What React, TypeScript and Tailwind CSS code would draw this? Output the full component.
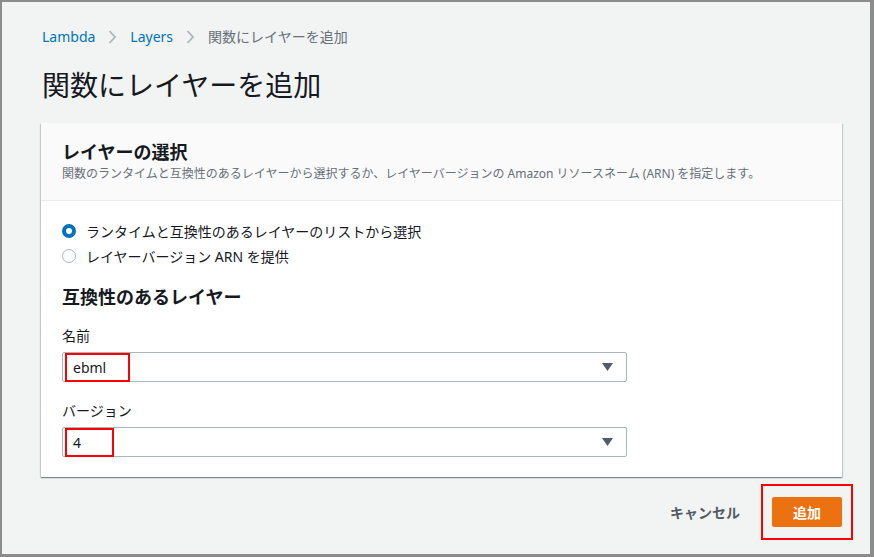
import React from "react";

const font = { fontFamily: '"Noto Sans", "Noto Sans CJK JP", sans-serif' };

function Arrow() {
  return (
    <svg width="11" height="8" viewBox="0 0 11 8" className="shrink-0">
      <path d="M0 0 L11 0 L5.5 8 Z" fill="#545b64" />
    </svg>
  );
}

function SelectBox({ value, boxW }: { value: string; boxW: number }) {
  return (
    <div className="relative flex h-[30px] w-[565px] items-center justify-between rounded-[2px] border border-[#aab7b8] bg-white pl-[10px] pr-[13px]">
      <span className="text-[14px] text-[#16191f]">{value}</span>
      <Arrow />
      <div
        className="pointer-events-none absolute left-[2px] top-0 h-[29px] border-2 border-[#ff0000]"
        style={{ width: boxW }}
      />
    </div>
  );
}

export default function App() {
  return (
    <div
      className="box-border h-[557px] w-[874px] overflow-hidden border-t-2 border-l-2 border-r-4 border-b-[3px] border-[#8c8c8c] bg-[#f2f3f3]"
      style={font}
    >
      <div className="flex h-[20px] items-center gap-[13px] pl-[40px] mt-[25px] text-[14px] leading-[20px]">
        <span className="text-[#0073bb]">Lambda</span>
        <svg width="9" height="14" viewBox="0 0 9 14">
          <path d="M1.5 1 L7 7 L1.5 13" stroke="#aab7b8" strokeWidth="1.8" fill="none" />
        </svg>
        <span className="text-[#0073bb]">Layers</span>
        <svg width="9" height="14" viewBox="0 0 9 14">
          <path d="M1.5 1 L7 7 L1.5 13" stroke="#aab7b8" strokeWidth="1.8" fill="none" />
        </svg>
        <span className="text-[#687078]">関数にレイヤーを追加</span>
      </div>
      <h1 className="mt-[20px] pl-[40px] text-[28px] leading-[36px] font-normal text-[#16191f]">
        関数にレイヤーを追加
      </h1>
      <div className="ml-[39px] mt-[20px] w-[801px] bg-white shadow-[0_1px_1px_0_rgba(0,28,36,0.3),1px_1px_1px_0_rgba(0,28,36,0.15),-1px_1px_1px_0_rgba(0,28,36,0.15)]">
        <div className="border-b border-[#eaeded] bg-[#fafafa] pl-[21px] pt-[17px] pb-[18px]">
          <div className="text-[18px] font-bold leading-[24px] text-[#16191f]">レイヤーの選択</div>
          <div className="mt-[2px] text-[12px] leading-[16px] text-[#687078]">
            関数のランタイムと互換性のあるレイヤーから選択するか、レイヤーバージョンの Amazon リソースネーム (ARN) を指定します。
          </div>
        </div>
        <div className="pl-[21px] pt-[20px] pb-[20px]">
          <div className="flex flex-col gap-[5px]">
            <label className="flex h-[20px] items-center gap-[10px] text-[14px] text-[#16191f]">
              <span className="box-border h-[14px] w-[14px] rounded-full border-[4.5px] border-[#0073bb] bg-white" />
              ランタイムと互換性のあるレイヤーのリストから選択
            </label>
            <label className="flex h-[20px] items-center gap-[10px] text-[14px] text-[#16191f]">
              <span className="box-border h-[14px] w-[14px] rounded-full border border-[#aab7b8] bg-white" />
              レイヤーバージョン ARN を提供
            </label>
          </div>
          <div className="mt-[19px] text-[18px] font-bold leading-[24px] text-[#16191f]">互換性のあるレイヤー</div>
          <div className="mt-[17px] text-[14px] leading-[20px] text-[#16191f]">名前</div>
          <div className="mt-[6px]">
            <SelectBox value="ebml" boxW={65} />
          </div>
          <div className="mt-[19px] text-[14px] leading-[20px] text-[#16191f]">バージョン</div>
          <div className="mt-[6px]">
            <SelectBox value="4" boxW={49} />
          </div>
        </div>
      </div>
      <div className="ml-[39px] mt-[20px] flex w-[801px] items-center justify-end gap-[32px]">
        <span className="text-[14px] font-bold text-[#545b64]">キャンセル</span>
        <div className="relative">
          <button className="flex h-[30px] w-[70px] items-center justify-center rounded-[2px] bg-[#ec7211] text-[14px] font-bold text-white">
            追加
          </button>
          <div className="pointer-events-none absolute left-[-11px] top-[-13px] h-[56px] w-[92px] border-2 border-[#ff0000]" />
        </div>
      </div>
    </div>
  );
}
